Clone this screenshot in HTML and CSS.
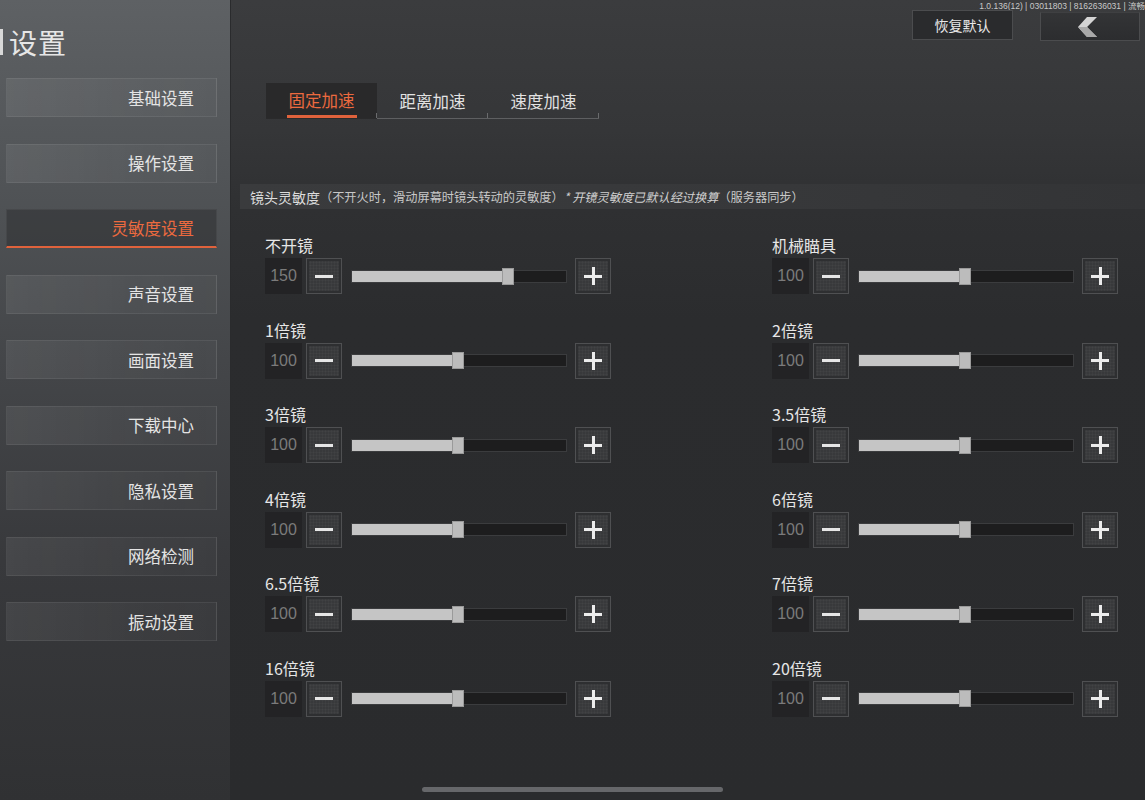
FILE: index.html
```html
<!DOCTYPE html>
<html lang="zh-CN">
<head>
<meta charset="utf-8">
<title>设置</title>
<link rel="stylesheet" href="styles.css">
</head>
<body>
<div class="app">
  <aside class="sidebar">
    <h1 class="title"><span class="title-bar"></span>设置</h1>
    <nav class="menu">
      <div class="menu-item">基础设置</div>
      <div class="menu-item">操作设置</div>
      <div class="menu-item active">灵敏度设置</div>
      <div class="menu-item">声音设置</div>
      <div class="menu-item">画面设置</div>
      <div class="menu-item">下载中心</div>
      <div class="menu-item">隐私设置</div>
      <div class="menu-item">网络检测</div>
      <div class="menu-item">振动设置</div>
    </nav>
  </aside>

  <main class="main">
    <div class="topbar">
      <div class="version">1.0.136(12) | 03011803 | 8162636031 | 流畅</div>
      <div class="top-actions">
        <button class="btn-reset">恢复默认</button>
        <button class="btn-back" aria-label="返回">
          <svg width="24" height="20" viewBox="0 0 24 20">
            <polygon points="9,0 19,0 9,10 19,20 9,20 0,10" fill="#d4d4d4"/>
            <polygon points="9,10 19,20 9,20 0,10" fill="#a9a9a9"/>
          </svg>
        </button>
      </div>
    </div>

    <div class="tabs">
      <div class="tab active"><span>固定加速</span></div>
      <div class="tab">距离加速</div>
      <div class="tab">速度加速</div>
    </div>

    <div class="section-head">
      镜头灵敏度<span class="sub">（不开火时，滑动屏幕时镜头转动的灵敏度）</span><em class="note">* 开镜灵敏度已默认经过换算</em><span class="sub">（服务器同步）</span>
    </div>

    <div class="grid">
      <div class="setting">
        <div class="label">不开镜</div>
        <div class="ctrl">
          <div class="value">150</div>
          <div class="step"><span class="minus"></span></div>
          <div class="track"><div class="fill" style="width:73%"></div><div class="thumb" style="left:73%"></div></div>
          <div class="step plus-btn"><span class="plus"></span></div>
        </div>
      </div>
      <div class="setting">
        <div class="label">机械瞄具</div>
        <div class="ctrl">
          <div class="value">100</div>
          <div class="step"><span class="minus"></span></div>
          <div class="track"><div class="fill" style="width:49.5%"></div><div class="thumb" style="left:49.5%"></div></div>
          <div class="step plus-btn"><span class="plus"></span></div>
        </div>
      </div>

      <div class="setting">
        <div class="label">1倍镜</div>
        <div class="ctrl">
          <div class="value">100</div>
          <div class="step"><span class="minus"></span></div>
          <div class="track"><div class="fill" style="width:49.5%"></div><div class="thumb" style="left:49.5%"></div></div>
          <div class="step plus-btn"><span class="plus"></span></div>
        </div>
      </div>
      <div class="setting">
        <div class="label">2倍镜</div>
        <div class="ctrl">
          <div class="value">100</div>
          <div class="step"><span class="minus"></span></div>
          <div class="track"><div class="fill" style="width:49.5%"></div><div class="thumb" style="left:49.5%"></div></div>
          <div class="step plus-btn"><span class="plus"></span></div>
        </div>
      </div>

      <div class="setting">
        <div class="label">3倍镜</div>
        <div class="ctrl">
          <div class="value">100</div>
          <div class="step"><span class="minus"></span></div>
          <div class="track"><div class="fill" style="width:49.5%"></div><div class="thumb" style="left:49.5%"></div></div>
          <div class="step plus-btn"><span class="plus"></span></div>
        </div>
      </div>
      <div class="setting">
        <div class="label">3.5倍镜</div>
        <div class="ctrl">
          <div class="value">100</div>
          <div class="step"><span class="minus"></span></div>
          <div class="track"><div class="fill" style="width:49.5%"></div><div class="thumb" style="left:49.5%"></div></div>
          <div class="step plus-btn"><span class="plus"></span></div>
        </div>
      </div>

      <div class="setting">
        <div class="label">4倍镜</div>
        <div class="ctrl">
          <div class="value">100</div>
          <div class="step"><span class="minus"></span></div>
          <div class="track"><div class="fill" style="width:49.5%"></div><div class="thumb" style="left:49.5%"></div></div>
          <div class="step plus-btn"><span class="plus"></span></div>
        </div>
      </div>
      <div class="setting">
        <div class="label">6倍镜</div>
        <div class="ctrl">
          <div class="value">100</div>
          <div class="step"><span class="minus"></span></div>
          <div class="track"><div class="fill" style="width:49.5%"></div><div class="thumb" style="left:49.5%"></div></div>
          <div class="step plus-btn"><span class="plus"></span></div>
        </div>
      </div>

      <div class="setting">
        <div class="label">6.5倍镜</div>
        <div class="ctrl">
          <div class="value">100</div>
          <div class="step"><span class="minus"></span></div>
          <div class="track"><div class="fill" style="width:49.5%"></div><div class="thumb" style="left:49.5%"></div></div>
          <div class="step plus-btn"><span class="plus"></span></div>
        </div>
      </div>
      <div class="setting">
        <div class="label">7倍镜</div>
        <div class="ctrl">
          <div class="value">100</div>
          <div class="step"><span class="minus"></span></div>
          <div class="track"><div class="fill" style="width:49.5%"></div><div class="thumb" style="left:49.5%"></div></div>
          <div class="step plus-btn"><span class="plus"></span></div>
        </div>
      </div>

      <div class="setting">
        <div class="label">16倍镜</div>
        <div class="ctrl">
          <div class="value">100</div>
          <div class="step"><span class="minus"></span></div>
          <div class="track"><div class="fill" style="width:49.5%"></div><div class="thumb" style="left:49.5%"></div></div>
          <div class="step plus-btn"><span class="plus"></span></div>
        </div>
      </div>
      <div class="setting">
        <div class="label">20倍镜</div>
        <div class="ctrl">
          <div class="value">100</div>
          <div class="step"><span class="minus"></span></div>
          <div class="track"><div class="fill" style="width:49.5%"></div><div class="thumb" style="left:49.5%"></div></div>
          <div class="step plus-btn"><span class="plus"></span></div>
        </div>
      </div>
    </div>
  </main>
</div>
<div class="home-indicator"></div>
</body>
</html>
```
FILE: styles.css
```css
* { box-sizing: border-box; }

html, body {
  margin: 0;
  padding: 0;
  width: 1145px;
  height: 800px;
  overflow: hidden;
  background: #2b2c2e;
  font-family: "Noto Sans CJK SC", "Noto Sans", sans-serif;
  color: #e2e2e2;
}

.app {
  display: flex;
  width: 1145px;
  height: 800px;
}

/* ---------- left navigation ---------- */
.sidebar {
  width: 231px;
  flex: none;
  background: linear-gradient(to bottom, #5e6164 0%, #515457 22%, #444649 45%, #38393c 70%, #303133 100%);
  border-right: 1px solid #2a2b2d;
}

.title {
  margin: 0;
  height: 78px;
  padding-top: 22px;
  display: flex;
  align-items: flex-start;
  font-size: 28px;
  font-weight: 400;
  line-height: 40px;
  color: #e6e6e6;
  letter-spacing: 1px;
}

.title-bar {
  display: inline-block;
  width: 3px;
  height: 26px;
  margin-top: 7px;
  margin-right: 6px;
  background: #d8d8d8;
}

.menu {
  display: flex;
  flex-direction: column;
  gap: 26.5px;
  padding-left: 6px;
}

.menu-item {
  width: 211px;
  height: 39px;
  display: flex;
  align-items: center;
  justify-content: flex-end;
  padding-right: 22px;
  font-size: 16.5px;
  color: #e4e4e4;
  background: linear-gradient(to right, rgba(255,255,255,0.07), rgba(255,255,255,0.035) 60%, rgba(255,255,255,0.02));
  border: 1px solid rgba(255,255,255,0.07);
}

.menu-item.active {
  color: #ec6a3f;
  background: rgba(40,40,42,0.45);
  border-color: rgba(255,255,255,0.05);
  border-bottom: 2px solid #e0623c;
}

/* ---------- content ---------- */
.main {
  flex: 1;
  position: relative;
  background: linear-gradient(to bottom, #3b3c3e 0%, #353638 130px, #2f3032 210px, #2b2c2e 320px, #2a2b2d 100%);
}

.topbar {
  height: 40px;
  display: flex;
  flex-direction: column;
  align-items: flex-end;
}

.version {
  height: 9px;
  margin-top: 2px;
  font-family: "Liberation Sans", "Noto Sans CJK SC", sans-serif;
  font-size: 8.5px;
  line-height: 9px;
  color: #c9c9c9;
  white-space: nowrap;
}

.top-actions {
  display: flex;
  align-items: flex-start;
  gap: 27px;
  padding-right: 5px;
  margin-top: -1px;
}

.btn-reset {
  width: 101px;
  height: 30px;
  border: 1px solid #4b4c4e;
  background: #2a2b2d;
  color: #e8e8e8;
  font-family: inherit;
  font-size: 14px;
  padding: 0;
}

.btn-back {
  width: 100px;
  height: 29px;
  margin-top: 2px;
  border: 1px solid #4b4c4e;
  border-top-color: #3f4042;
  background: linear-gradient(to bottom, #333436, #2c2d2f);
  display: flex;
  align-items: center;
  justify-content: center;
  padding: 0;
}

/* tabs */
.tabs {
  display: flex;
  margin: 43px 0 0 35px;
  height: 36px;
}

.tab {
  position: relative;
  width: 111px;
  height: 36px;
  display: flex;
  align-items: center;
  justify-content: center;
  font-size: 16.5px;
  color: #e2e2e2;
  border-bottom: 1px solid #5e5f61;
}

.tab::after {
  content: "";
  position: absolute;
  right: 0;
  bottom: 0;
  width: 1px;
  height: 5px;
  background: #6a6b6d;
}

.tab.active {
  background: #29292a;
  color: #ec6a3f;
  border-bottom: 1px solid #2a2a2b;
}

.tab.active span {
  display: inline-block;
  padding: 0 2px 3px;
  margin-top: 4px;
  border-bottom: 3px solid #e0623c;
}

/* section header band */
.section-head {
  margin: 65px 0 0 9px;
  height: 25px;
  padding-left: 10px;
  display: flex;
  align-items: center;
  font-size: 14px;
  color: #dcdcdc;
  background: linear-gradient(to right, #3a3b3d, #37383a 60%, #333436);
  white-space: nowrap;
}

.section-head .sub {
  font-size: 12.2px;
  color: #c8c8c8;
}

.section-head .note {
  font-size: 12.2px;
  color: #d0d0d0;
  font-style: italic;
}

/* sensitivity grid */
.grid {
  display: grid;
  grid-template-columns: 507px 360px;
  row-gap: 25.5px;
  margin: 26px 0 0 34px;
}

.setting {
  display: flex;
  flex-direction: column;
  gap: 2px;
}

.label {
  height: 21px;
  font-size: 16px;
  line-height: 21px;
  color: #e6e6e6;
}

.ctrl {
  display: flex;
  align-items: center;
  height: 36px;
}

.value {
  width: 37px;
  height: 36px;
  flex: none;
  background: #232325;
  color: #7b7b7b;
  font-family: "Liberation Sans", sans-serif;
  font-size: 16px;
  display: flex;
  align-items: center;
  justify-content: center;
}

.step {
  width: 36px;
  height: 36px;
  flex: none;
  margin-left: 4px;
  border: 1px solid #4f5052;
  background:
    repeating-linear-gradient(0deg, rgba(255,255,255,0.025) 0 1px, transparent 1px 3px),
    repeating-linear-gradient(90deg, rgba(255,255,255,0.025) 0 1px, transparent 1px 3px),
    #38393b;
  box-shadow: inset 0 0 0 2px #2e2f31;
  display: flex;
  align-items: center;
  justify-content: center;
}

.plus-btn {
  margin-left: 8px;
}

.minus {
  display: block;
  width: 18px;
  height: 3px;
  background: #e6e6e6;
}

.plus {
  position: relative;
  display: block;
  width: 18px;
  height: 3px;
  background: #ececec;
}

.plus::after {
  content: "";
  position: absolute;
  left: 7.5px;
  top: -7.5px;
  width: 3px;
  height: 18px;
  background: #ececec;
}

.track {
  position: relative;
  width: 216px;
  height: 13px;
  flex: none;
  margin-left: 9px;
  background: #1d1d1e;
  border: 1px solid #3b3c3e;
}

.fill {
  height: 100%;
  background: #c5c5c5;
}

.thumb {
  position: absolute;
  top: -3px;
  width: 12px;
  height: 17px;
  margin-left: -6px;
  background: #bcbcbc;
  border: 1px solid #9a9a9a;
}

.home-indicator {
  position: absolute;
  left: 422px;
  top: 787px;
  width: 301px;
  height: 5px;
  border-radius: 3px;
  background: #66676a;
}
```
